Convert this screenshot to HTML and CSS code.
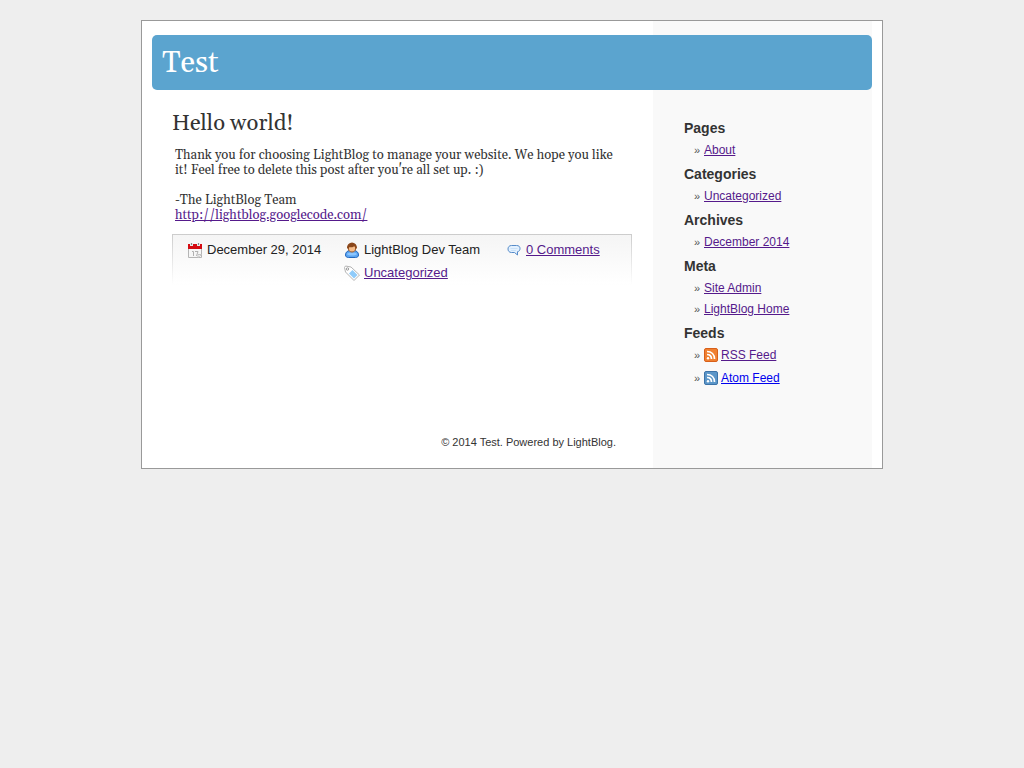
FILE: index.html
```html
<!DOCTYPE html>
<html lang="en">
<head>
<meta charset="utf-8">
<meta name="viewport" content="width=device-width, initial-scale=1">
<title>Test</title>
<link rel="stylesheet" href="styles.css">
</head>
<body>
<div class="page">
  <header class="banner"><h1 class="site-title">Test</h1></header>
  <div class="columns">
    <div class="content">
      <main>
        <article class="post">
          <h2 class="post-title">Hello world!</h2>
          <div class="post-body">
            <p>Thank you for choosing LightBlog to manage your website. We hope you like it! Feel free to delete this post after you're all set up. :)</p>
            <p>-The LightBlog Team<br><a href="#">http://lightblog.googlecode.com/</a></p>
          </div>
          <div class="post-meta">
            <span class="meta-item date">
              <svg class="icon" viewBox="0 0 16 16" aria-hidden="true"><path fill="#f6f6f6" stroke="#b5b5b5" d="M1.500 5.500h13v10h-13z"/><path fill="#d40c12" d="M1 2h14v5H1z"/><path fill="#e9e9e9" d="M3 1h3v3H3zM10 1h3v3h-3z"/><path fill="#8a8a8a" d="M4 1h1v2H4zM11 1h1v2h-1z"/><path fill="none" stroke="#b0b0b0" d="M5 9.500h1.500V14M8 9.500h3L9.500 14"/><path fill="#fff" stroke="#c4c4c4" d="M11 15.500v-3h3.500z"/></svg>
              December 29, 2014</span>
            <span class="meta-item author">
              <svg class="icon" viewBox="0 0 16 16" aria-hidden="true"><path fill="#5ba5f2" stroke="#2468bd" d="M1.500 13c0-3 2-4 4-4.500h5c2 .5 4 1.500 4 4.500 0 1.500-1 2.500-3 2.500h-7c-2 0-3-1-3-2.500z"/><path fill="#8bc6ff" d="M3 12c1-2 9-2 10 0-1 2-9 2-10 0z"/><path fill="#f6bd8a" stroke="#9b5726" d="M4.500 5c0-5 7-5 7 0v2c0 4-7 4-7 0z"/><path fill="#8a471b" d="M3 6c0-7 10-7 10 0l-1 1c0-2-1-3-3-2-2 1-4-1-5 2z"/></svg>
              LightBlog Dev Team</span>
            <span class="meta-item comments">
              <svg class="icon" viewBox="0 0 16 16" aria-hidden="true"><path fill="#e3f1ff" stroke="#568bc9" d="M5.500 3.500h5c2.500 0 3.500 1.300 3.500 3s-.8 3-2.500 3.200V13L8.500 10.500h-3c-2.500 0-3.500-1.800-3.500-3.500s1-3.500 3.500-3.500z"/><path stroke="#c9e1f8" d="M4.500 6.500h7M5 8.500h5"/></svg>
              <a href="#">0 Comments</a></span>
            <span class="meta-item category">
              <svg class="icon" viewBox="0 0 16 16" aria-hidden="true"><path fill="#fff" stroke="#b3b3b3" d="M.5 2.500l1-1.500L7 2l8.500 8-5.500 5.500L1.500 7z"/><path fill="#8fcbfa" d="M8.500 5l5 5-3.500 3.500-5-5z"/><circle cx="3.500" cy="4" r="1.200" fill="#fff" stroke="#999"/></svg>
              <a href="#">Uncategorized</a></span>
          </div>
        </article>
      </main>
      <footer class="footer">© 2014 Test. Powered by LightBlog.</footer>
    </div>
    <nav class="sidebar" aria-label="Sidebar">
      <h3>Pages</h3>
      <ul><li><a href="#">About</a></li></ul>
      <h3>Categories</h3>
      <ul><li><a href="#">Uncategorized</a></li></ul>
      <h3>Archives</h3>
      <ul><li><a href="#">December 2014</a></li></ul>
      <h3>Meta</h3>
      <ul><li><a href="#">Site Admin</a></li><li><a href="#">LightBlog Home</a></li></ul>
      <h3>Feeds</h3>
      <ul class="feeds">
        <li><svg class="feed-icon" viewBox="0 0 14 14" aria-hidden="true"><rect x=".5" y=".5" width="13" height="13" rx="1.500" fill="#f08030" stroke="#d8601a"/><path fill="none" stroke="#fff" stroke-width="1.700" d="M3 3.500c4.500 0 7.500 3 7.500 7.500M3 6.500c2.700 0 4.500 1.800 4.500 4.500"/><circle cx="4" cy="10.200" r="1.200" fill="#fff"/></svg><a href="#">RSS Feed</a></li>
        <li><svg class="feed-icon" viewBox="0 0 14 14" aria-hidden="true"><rect x=".5" y=".5" width="13" height="13" rx="1.500" fill="#5b96c8" stroke="#3c73a8"/><path fill="none" stroke="#fff" stroke-width="1.700" d="M3 3.500c4.500 0 7.500 3 7.500 7.500M3 6.500c2.700 0 4.500 1.800 4.500 4.500"/><circle cx="4" cy="10.200" r="1.200" fill="#fff"/></svg><a class="unvisited" href="#">Atom Feed</a></li>
      </ul>
    </nav>
  </div>
</div>
</body>
</html>
```

FILE: styles.css
```css
* { box-sizing: border-box; }

body {
  margin: 0;
  padding: 20px;
  background: #eee;
  color: #333;
  font-family: "Liberation Sans", Arial, sans-serif;
}

h1, h2, h3, p, ul { margin: 0; padding: 0; font-weight: normal; }

a { color: #551a8b; }
.unvisited { color: #00e; }

.page {
  max-width: 742px;
  margin: 0 auto;
  padding: 14px 10px 0;
  border: 1px solid #999;
  background: linear-gradient(#f9f9f9, #f9f9f9) right 10px top / 219px 100% no-repeat #fff;
}

.banner {
  padding: 10px 10px 9px;
  border-radius: 5px;
  background: #5ba4cf;
}

.site-title {
  color: #fff;
  font: 30px/36px Gelasio, Georgia, "Liberation Serif", serif;
}

.columns { display: flex; }

.content {
  display: flex;
  flex: 1;
  flex-direction: column;
  justify-content: space-between;
  padding: 20px 21px 18px 20px;
}

.post-title { font: 22px/28px Gelasio, Georgia, "Liberation Serif", serif; }

.post-body {
  display: grid;
  gap: 15px;
  padding: 10px 13px 11px 3px;
  font: 13px/15px Gelasio, Georgia, "Liberation Serif", serif;
}

.post-meta {
  display: grid;
  grid-template-columns: 157px 162px auto;
  row-gap: 7px;
  padding: 7px 14px 3px;
  border: 1px solid;
  border-image: linear-gradient(#ccc, #fff) 1;
  background: linear-gradient(#f5f5f5, #fff);
  color: #222;
  font-size: 13px;
  line-height: 16px;
}

.meta-item { display: flex; gap: 4px; }
.category { grid-column: 2; }

.icon { width: 16px; height: 16px; }

.footer {
  padding-right: 16px;
  font-size: 11px;
  line-height: 16px;
  text-align: right;
}

.sidebar {
  width: 219px;
  padding: 30px 10px 74px 31px;
}

.sidebar h3 {
  font-size: 14px;
  font-weight: bold;
  line-height: 17px;
}

.sidebar ul {
  display: grid;
  gap: 5px;
  padding: 5px 0 8px 10px;
  list-style: none;
  font-size: 12px;
  line-height: 16px;
}

.sidebar li { display: flex; align-items: center; }

.sidebar li::before {
  content: "»";
  width: 10px;
  color: #555;
  font-size: 11px;
}

.sidebar .feeds { gap: 7px; }
.feed-icon { width: 14px; height: 14px; margin-right: 3px; }

@media (max-width: 640px) {
  .page { background: #fff; }
  .columns { flex-direction: column; }
  .post-meta { grid-template-columns: 1fr; }
  .category { grid-column: auto; }
  .sidebar { width: auto; background: #f9f9f9; }
}
```
